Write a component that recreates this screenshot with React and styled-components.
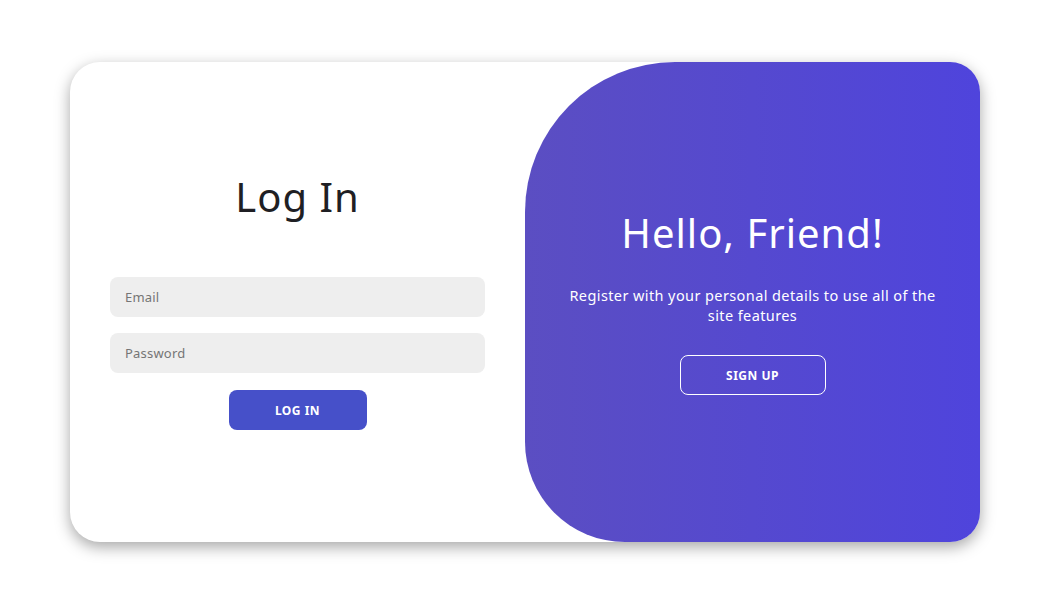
import React from 'react';
import styled, { createGlobalStyle } from 'styled-components';

const GlobalStyle = createGlobalStyle`
  * {
    box-sizing: border-box;
  }

  html,
  body {
    margin: 0;
    padding: 0;
    background: #ffffff;
    font-family: 'Noto Sans', 'Open Sans', sans-serif;
  }
`;

export default function App() {
  return (
    <>
      <GlobalStyle />
      <Page>
        <Card>
          <FormSide>
            <Title>Log In</Title>
            <Field type='email' placeholder='Email' />
            <Field type='password' placeholder='Password' />
            <Button>Log In</Button>
          </FormSide>
          <Panel>
            <PanelTitle>Hello, Friend!</PanelTitle>
            <Text>
              Register with your personal details to use all of the site
              features
            </Text>
            <Button ghost>Sign Up</Button>
          </Panel>
        </Card>
      </Page>
    </>
  );
}

const Page = styled.main`
  width: 100%;
  height: 599px;
  display: flex;
  align-items: center;
  justify-content: center;
  padding-top: 5px;
`;

const Card = styled.div`
  width: 910px;
  height: 480px;
  display: grid;
  grid-template-columns: 1fr 1fr;
  background: #ffffff;
  border-radius: 30px;
  overflow: hidden;
  box-shadow: 0 5px 15px rgba(0, 0, 0, 0.35);
`;

const FormSide = styled.form`
  display: flex;
  flex-direction: column;
  align-items: center;
  justify-content: center;
  padding: 0 40px;
`;

const Title = styled.h1`
  margin: 0 0 57px;
  font-size: 40px;
  line-height: 46px;
  font-weight: 400;
  letter-spacing: 1px;
  color: #1f1f24;
`;

const Field = styled.input`
  width: 100%;
  height: 40px;
  margin-bottom: 16px;
  padding: 0 15px;
  border: none;
  border-radius: 8px;
  background: #eeeeee;
  font-family: inherit;
  font-size: 13px;
  letter-spacing: 0.2px;
  outline: none;

  &::placeholder {
    color: #757575;
  }

  &:last-of-type {
    margin-bottom: 17px;
  }
`;

const Button = styled.button`
  height: 40px;
  min-width: ${p => (p.ghost ? '146px' : '138px')};
  padding: 0 30px;
  border: 1px solid ${p => (p.ghost ? '#ffffff' : 'transparent')};
  border-radius: 8px;
  background: ${p => (p.ghost ? 'transparent' : '#4650c9')};
  color: #ffffff;
  font-family: inherit;
  font-size: 12px;
  font-weight: 700;
  letter-spacing: 0.5px;
  text-transform: uppercase;
  cursor: pointer;
`;

const Panel = styled.div`
  display: flex;
  flex-direction: column;
  align-items: center;
  justify-content: center;
  padding: 0 40px;
  border-radius: 150px 0 0 100px;
  background: linear-gradient(to right, #5b4ec2, #4f44dc);
  color: #ffffff;
  text-align: center;
`;

const PanelTitle = styled.h1`
  margin: 0 0 28px;
  font-size: 40px;
  line-height: 48px;
  font-weight: 400;
  letter-spacing: 1px;
`;

const Text = styled.p`
  margin: 0 0 30px;
  font-size: 14.5px;
  line-height: 20px;
  letter-spacing: 0.4px;
`;
